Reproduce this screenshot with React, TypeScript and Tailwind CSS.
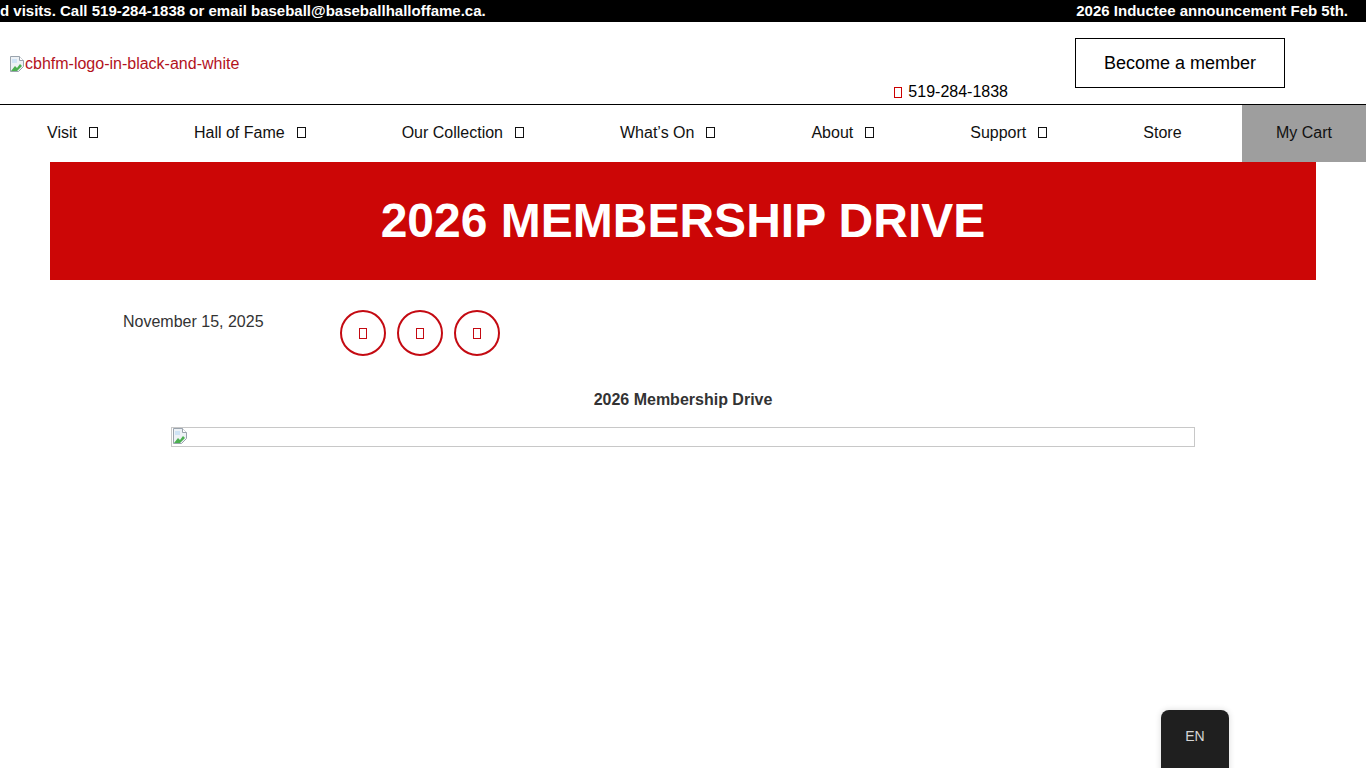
import React from "react";

// ── helpers ───────────────────────────────────────────────────────────────────

function Tofu({ className = "" }: { className?: string }) {
  return <span className={`inline-block w-[8px] h-[11px] border border-current ${className}`} />;
}

function BrokenImage() {
  return (
    <svg width="16" height="16" viewBox="0 0 16 16" className="shrink-0">
      <path d="M1.5 0.5h9l4 4v6l-5 5h-8z" fill="#eef2f6" stroke="#9aa3ad" />
      <path d="M10.5 0.5v4h4" fill="#fff" stroke="#9aa3ad" />
      <path d="M2 15l4-5 2 2 3-4 2 2-5 5z" fill="#4caf50" />
      <path d="M3 3h5v4H3z" fill="#cfe3f5" />
    </svg>
  );
}

const NAV = [
  { label: "Visit", drop: true },
  { label: "Hall of Fame", drop: true },
  { label: "Our Collection", drop: true },
  { label: "What’s On", drop: true },
  { label: "About", drop: true },
  { label: "Support", drop: true },
  { label: "Store", drop: false },
];

// ── page ──────────────────────────────────────────────────────────────────────

export default function App() {
  return (
    <div className="relative min-h-[768px] bg-white font-['Liberation_Sans',Arial,sans-serif] text-black overflow-hidden">
      {/* Announcement bar */}
      <div className="h-[22px] bg-black text-white text-[15px] font-bold flex items-center justify-between whitespace-nowrap pr-[18px]">
        <span>d visits. Call 519-284-1838 or email baseball@baseballhalloffame.ca.</span>
        <span>2026 Inductee announcement Feb 5th.</span>
      </div>

      {/* Header */}
      <div className="h-[83px] border-b border-black flex">
        <div className="flex-1 flex items-center pl-[9px] pt-[1px]">
          <span className="flex items-center text-[16px] text-[#b3121c]">
            <BrokenImage />
            cbhfm-logo-in-black-and-white
          </span>
        </div>
        <div className="flex items-end mr-[67px]">
          <span className="flex items-center gap-[6px] text-[16px] leading-[20px] translate-y-[-2px]">
            <Tofu className="text-[#c00] h-[10px] w-[7px]" />
            519-284-1838
          </span>
        </div>
        <div className="pt-[16px] pr-[81px]">
          <button className="w-[210px] h-[50px] border border-black text-[18px] flex items-center justify-center">
            Become a member
          </button>
        </div>
      </div>

      {/* Nav */}
      <nav className="h-[57px] flex items-stretch text-[16px] text-[#111]">
        {NAV.map((n) => (
          <div key={n.label} className="flex items-center px-[47px] pb-[2px] whitespace-nowrap">
            {n.label}
            {n.drop && <Tofu className="ml-[12px] mr-[2px] h-[10px] w-[9px]" />}
          </div>
        ))}
        <div className="ml-auto w-[124px] bg-[#9e9e9e] flex items-center justify-center pb-[2px]">My Cart</div>
      </nav>

      {/* Banner */}
      <div className="mx-[50px] h-[118px] bg-[#cc0606] flex items-center justify-center">
        <h1 className="text-white text-[48px] font-bold">2026 MEMBERSHIP DRIVE</h1>
      </div>

      {/* Meta row */}
      <div className="flex pl-[123px] pt-[30px]">
        <p className="w-[217px] text-[16px] text-[#333] leading-none pt-[4px]">November 15, 2025</p>
        <div className="flex gap-[11px]">
          {[0, 1, 2].map((i) => (
            <div
              key={i}
              className="w-[46px] h-[46px] rounded-full border-2 border-[#c40a12] flex items-center justify-center text-[#c40a12]"
            >
              <Tofu className="h-[10px] w-[8px]" />
            </div>
          ))}
        </div>
      </div>

      {/* Content */}
      <h2 className="text-center text-[16px] font-bold text-[#333] mt-[32px]">2026 Membership Drive</h2>
      <div className="mx-[171px] mt-[15px] h-[20px] border border-[#c8c8c8] flex items-start">
        <BrokenImage />
      </div>

      {/* Language widget */}
      <div className="absolute left-[1161px] top-[710px] w-[68px] h-[70px] bg-[#1f1f1f] rounded-t-[8px] shadow-[0_0_6px_rgba(0,0,0,0.15)] flex justify-center pt-[16px] text-[14px] text-[#d6d6d6]">
        EN
      </div>
    </div>
  );
}
